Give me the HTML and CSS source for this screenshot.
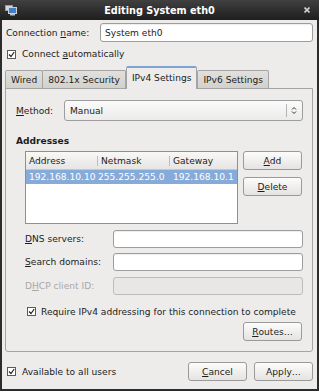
FILE: index.html
```html
<!DOCTYPE html>
<html lang="en">
  <head>
    <meta charset="UTF-8" />
    <title>Editing System eth0</title>
    <link rel="stylesheet" href="styles.css">
  </head>
  <body>
    <div class="window">
      <div class="titlebar">
        <div class="tb-side">
          <svg class="app-icon" width="12" height="11" viewBox="0 0 12 11">
            <rect x="0.5" y="0.5" width="7" height="5" fill="#d8d8d8" stroke="#9a9a9a" />
            <rect x="3.5" y="2.5" width="8" height="6" fill="#3f7fc9" stroke="#d0d0d0" />
            <rect x="5" y="9" width="5" height="1.5" fill="#bdbdbd" />
          </svg>
        </div>
        <div class="title">Editing System eth0</div>
        <div class="tb-side close">
          <svg width="6" height="6" viewBox="0 0 6 6">
            <path d="M0.5 0.5 L5.5 5.5 M5.5 0.5 L0.5 5.5" stroke="#cfcfcf" stroke-width="1.6" />
          </svg>
        </div>
      </div>

      <div class="content">
        <div class="name-row">
          <span class="name-label">Connection <u>n</u>ame:</span>
          <div class="entry name-entry">System eth0</div>
        </div>

        <div class="check-row top-check">
          <span class="box"><svg width="7" height="7" viewBox="0 0 7 7"><path d="M1 3.5 L3 5.5 L6.2 1" fill="none" stroke="#222" stroke-width="1.2" /></svg></span>
          <span>Connect <u>a</u>utomatically</span>
        </div>

        <div class="tabs">
          <div class="tab">Wired</div>
          <div class="tab">802.1x Security</div>
          <div class="tab active">IPv4 Settings</div>
          <div class="tab">IPv6 Settings</div>
        </div>

        <div class="panel">
          <div class="method-row">
            <span class="method-label"><u>M</u>ethod:</span>
            <div class="combo">
              <span class="combo-text">Manual</span>
              <span class="combo-sep"></span>
              <svg class="combo-arrows" width="6" height="9" viewBox="0 0 6 9">
                <path d="M1 3.5 L3 1.5 L5 3.5 M1 5.5 L3 7.5 L5 5.5" fill="none" stroke="#333" stroke-width="1" />
              </svg>
            </div>
          </div>

          <div class="section-title">Addresses</div>

          <div class="addresses">
            <div class="table">
              <div class="thead">
                <div class="th col1">Address</div>
                <div class="th col2">Netmask</div>
                <div class="th col3">Gateway</div>
              </div>
              <div class="tr selected">
                <div class="td col1">192.168.10.10</div>
                <div class="td col2">255.255.255.0</div>
                <div class="td col3">192.168.10.1</div>
              </div>
            </div>
            <div class="side-buttons">
              <div class="button"><u>A</u>dd</div>
              <div class="button"><u>D</u>elete</div>
            </div>
          </div>

          <div class="field-row first">
            <span class="field-label"><u>D</u>NS servers:</span>
            <div class="entry field-entry"></div>
          </div>
          <div class="field-row">
            <span class="field-label"><u>S</u>earch domains:</span>
            <div class="entry field-entry"></div>
          </div>
          <div class="field-row disabled">
            <span class="field-label">D<u>H</u>CP client ID:</span>
            <div class="entry field-entry"></div>
          </div>

          <div class="check-row require">
            <span class="box"><svg width="7" height="7" viewBox="0 0 7 7"><path d="M1 3.5 L3 5.5 L6.2 1" fill="none" stroke="#222" stroke-width="1.2" /></svg></span>
            <span>Require IPv4 addressing for this connection to complete</span>
          </div>

          <div class="button routes"><u>R</u>outes…</div>
        </div>

        <div class="footer">
          <div class="check-row">
            <span class="box"><svg width="7" height="7" viewBox="0 0 7 7"><path d="M1 3.5 L3 5.5 L6.2 1" fill="none" stroke="#222" stroke-width="1.2" /></svg></span>
            <span>Available to all users</span>
          </div>
          <div class="footer-buttons">
            <div class="button"><u>C</u>ancel</div>
            <div class="button">Apply…</div>
          </div>
        </div>
      </div>
    </div>
  </body>
</html>
```

FILE: styles.css
```css
* {
  margin: 0;
  padding: 0;
  box-sizing: border-box;
}

body {
  margin: 0;
  background: #edeceb;
  font-family: "DejaVu Sans", sans-serif;
  font-size: 9.1px;
  color: #1c1c1c;
}

u {
  text-decoration: underline;
  text-underline-offset: 1px;
}

.window {
  width: 319px;
  height: 391px;
  display: flex;
  flex-direction: column;
  background: #edeceb;
  border: 2px solid #2c2c2c;
  border-top: 0;
}

/* title bar */
.titlebar {
  height: 20px;
  flex: 0 0 20px;
  display: flex;
  align-items: center;
  background: linear-gradient(#404040, #1e1e1e);
  margin: 0 -2px;
}

.tb-side {
  width: 22px;
  display: flex;
  align-items: center;
  padding-left: 5px;
}

.tb-side.close {
  justify-content: flex-end;
  padding-right: 9px;
  padding-left: 0;
}

.title {
  flex: 1;
  text-align: center;
  color: #fff;
  font-weight: bold;
  font-size: 9.7px;
}

/* main area */
.content {
  flex: 1;
  display: flex;
  flex-direction: column;
  padding: 3px 4px 0 3px;
}

.name-row {
  display: flex;
  align-items: center;
  height: 19px;
}

.name-label {
  flex: 1;
  padding-left: 1px;
}

.entry {
  height: 19px;
  border: 1px solid #9d9d9d;
  border-radius: 3px;
  background: #fff;
  display: flex;
  align-items: center;
  padding-left: 4px;
  box-shadow: inset 0 1px 1px rgba(0, 0, 0, 0.07);
}

.name-entry {
  width: 213px;
}

.check-row {
  display: flex;
  align-items: center;
  height: 14px;
}

.top-check {
  margin-top: 5px;
  padding-left: 2px;
}

.box {
  width: 9px;
  height: 9px;
  border: 1px solid #5a5a5a;
  background: #fff;
  margin-right: 6px;
  display: flex;
  align-items: center;
  justify-content: center;
}

/* notebook */
.tabs {
  margin-top: 6px;
  height: 22px;
  display: flex;
  align-items: flex-end;
  margin-bottom: -1px;
}

.tab {
  height: 19px;
  padding: 0 5px;
  display: flex;
  align-items: center;
  border: 1px solid #a4a4a4;
  border-bottom: 0;
  border-radius: 2px 2px 0 0;
  background: linear-gradient(#e2e0dc, #d2d0cb);
  margin-left: -1px;
}

.tab:first-child {
  margin-left: 0;
}

.tab.active {
  height: 23px;
  margin-left: 0;
  margin-right: 1px;
  background: #edeceb;
  border-color: #a4a4a4;
  border-top: 2px solid #7ea4cf;
  padding-bottom: 2px;
  position: relative;
  z-index: 1;
}

.panel {
  height: 264px;
  border: 1px solid #a4a4a4;
  border-radius: 0 0 3px 3px;
  display: flex;
  flex-direction: column;
  padding: 11px 9px 0 10px;
}

.method-row {
  display: flex;
  align-items: center;
  height: 21px;
}

.method-label {
  width: 48px;
}

.combo {
  flex: 1;
  height: 21px;
  border: 1px solid #9d9d9d;
  border-radius: 3px;
  background: linear-gradient(#fbfbfb, #ebebea);
  display: flex;
  align-items: center;
  padding-left: 5px;
}

.combo-text {
  flex: 1;
}

.combo-sep {
  width: 1px;
  height: 13px;
  background: #b5b5b5;
  margin-right: 4px;
}

.combo-arrows {
  margin-right: 5px;
}

.section-title {
  margin-top: 14px;
  font-weight: bold;
  line-height: 12px;
}

.addresses {
  margin-top: 4px;
  padding-left: 9px;
  display: flex;
  gap: 5px;
}

.table {
  width: 213px;
  height: 73px;
  border: 1px solid #8f8f8f;
  background: #fff;
}

.thead {
  height: 18px;
  display: flex;
  align-items: center;
  background: linear-gradient(#f8f8f7, #e6e5e3);
  border-bottom: 1px solid #c9c8c5;
}

.tr {
  height: 14px;
  display: flex;
  align-items: center;
}

.tr.selected {
  background: #86abd9;
  color: #fff;
}

.th,
.td {
  padding-left: 3px;
  white-space: nowrap;
  overflow: hidden;
}

.col1 {
  width: 71px;
}

.col2 {
  width: 72px;
}

.col3 {
  flex: 1;
}

.th.col2,
.th.col3 {
  border-left: 1px solid #bdbcb9;
}

.td.col2 {
  padding-left: 1px;
}

.td.col3 {
  padding-left: 4px;
}

.side-buttons {
  display: flex;
  flex-direction: column;
  gap: 7px;
}

.button {
  width: 59px;
  height: 19px;
  border: 1px solid #9a9a9a;
  border-radius: 3px;
  background: linear-gradient(#fcfcfc, #e4e3e1);
  display: flex;
  align-items: center;
  justify-content: center;
}

.field-row {
  display: flex;
  align-items: center;
  height: 18px;
  padding-left: 9px;
  margin-top: 5px;
}

.field-row.first {
  margin-top: 6px;
}

.field-row.disabled {
  margin-top: 6px;
  color: #a9a8a6;
}

.field-label {
  width: 88px;
}

.field-entry {
  flex: 1;
  height: 18px;
}

.disabled .field-entry {
  background: #e8e7e5;
  border-color: #bdbcba;
  box-shadow: none;
}

.require {
  margin-top: 10px;
  padding-left: 11px;
  height: 13px;
}

.require .box {
  margin-right: 5px;
}

.routes {
  margin-top: 4px;
  align-self: flex-end;
  margin-right: 1px;
}

.footer {
  flex: 1;
  display: flex;
  align-items: center;
  justify-content: space-between;
  padding: 2px 0 0 2px;
}

.footer-buttons {
  display: flex;
  gap: 7px;
}
```
